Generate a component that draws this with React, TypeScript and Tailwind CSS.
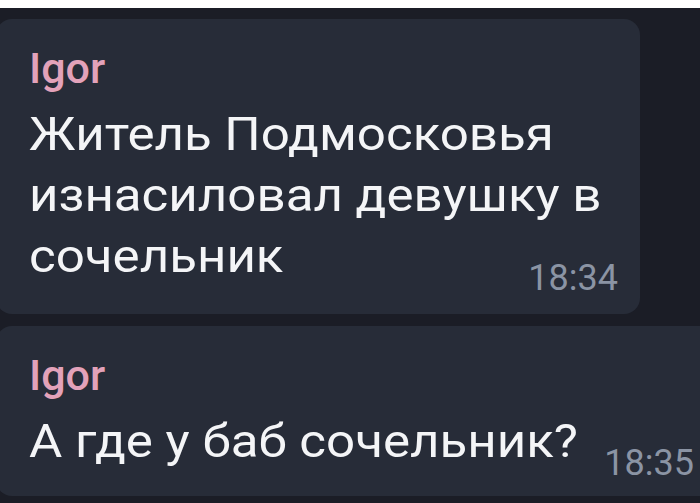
type Message = {
  author: string
  lines: string[]
  time: string
}

const messages: Message[] = [
  {
    author: 'Igor',
    lines: ['Житель Подмосковья', 'изнасиловал девушку в', 'сочельник'],
    time: '18:34'
  },
  {
    author: 'Igor',
    lines: ['А где у баб сочельник?'],
    time: '18:35'
  }
]

// the screenshot is a bit stretched sideways, so body text gets a horizontal scale
const stretch = 'inline-block origin-left scale-x-[1.11] whitespace-nowrap'

function Bubble({ message, wide }: { message: Message; wide?: boolean }) {
  const body = message.lines.slice(0, -1)
  const last = message.lines[message.lines.length - 1]

  return (
    <div
      className={
        wide
          ? 'ml-[-4px] w-[720px] shrink-0 rounded-[16px] bg-[#272c38] pl-[33px] pr-[22px] pt-[25px] pb-[24px]'
          : 'ml-[-4px] w-[644px] shrink-0 rounded-[16px] bg-[#272c38] pl-[33px] pr-[22px] pt-[25px] pb-[27px]'
      }
    >
      <div className="text-[43px] leading-[48px] font-medium text-[#e3a2ba]">
        {message.author}
      </div>
      <div className="mt-[12px] text-[46px] leading-[61px] text-[#f4f5f7]">
        {body.map((line) => (
          <div key={line}>
            <span className={stretch}>{line}</span>
          </div>
        ))}
        <div className="flex items-end justify-between">
          <span className={stretch}>{last}</span>
          <span className="mb-[-12px] text-[36px] leading-[41px] text-[#8b94a4]">
            {message.time}
          </span>
        </div>
      </div>
    </div>
  )
}

export default function App() {
  return (
    <div
      className="flex h-[503px] w-[700px] flex-col overflow-hidden bg-[#1b1d26]"
      style={{ fontFamily: 'Roboto, "Noto Sans", sans-serif' }}
    >
      <div className="h-[8px] shrink-0 bg-white" />
      <div className="flex flex-col gap-[12px] pt-[11px]">
        <Bubble message={messages[0]} />
        <Bubble message={messages[1]} wide />
      </div>
    </div>
  )
}
